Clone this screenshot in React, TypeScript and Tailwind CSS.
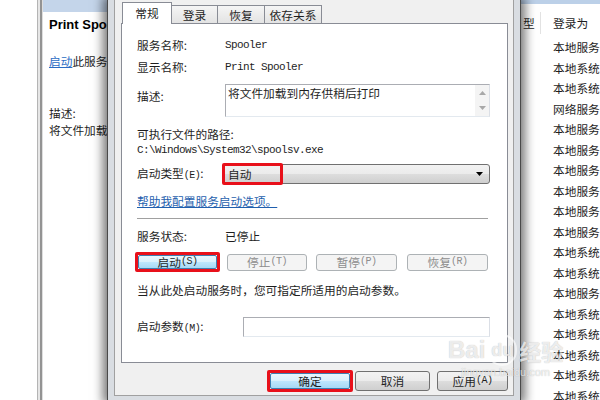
import React from "react";

const normalBtn =
  "flex items-center justify-center rounded-[3px] border border-[#707070] bg-[linear-gradient(#f2f2f2_0%,#ebebeb_50%,#dddddd_51%,#cfcfcf_100%)] text-[#1e1e1e]";
const disabledBtn =
  "flex items-center justify-center rounded-[3px] border border-[#adb2b5] bg-[#f4f4f4] text-[#8d8d8d]";
const blueBtn =
  "flex h-full w-full items-center justify-center rounded-[2px] border border-[#3c7fb1] bg-[linear-gradient(#eaf6fd_0%,#d9f0fc_50%,#bee6fd_51%,#a7d9f5_100%)] text-[#1e1e1e]";

function Key({ k }: { k: string }) {
  return <span className="font-['Liberation_Mono',monospace] text-[10px] tracking-[-0.5px]">({k})</span>;
}

const rows = [
  "本地服务",
  "本地系统",
  "本地系统",
  "网络服务",
  "本地服务",
  "本地服务",
  "本地服务",
  "本地服务",
  "本地服务",
  "本地服务",
  "本地系统",
  "本地系统",
  "本地服务",
  "本地系统",
  "本地系统",
  "本地系统",
  "本地系统",
  "本地系统",
];

export default function App() {
  return (
    <div className="relative flex h-[400px] w-[600px] overflow-hidden bg-white font-['Noto_Sans_CJK_SC',sans-serif] text-[11.7px] leading-[16px] text-[#1e1e1e]">
      {/* white margin */}
      <div className="w-[37px] shrink-0 bg-white" />
      {/* window edge lines */}
      <div className="flex w-[6px] shrink-0">
        <div className="w-px bg-[#b4b4b4]" />
        <div className="w-[2px] bg-[#e6e6e6]" />
        <div className="w-[2px] bg-[#939393]" />
        <div className="w-px bg-[#dedede]" />
      </div>
      {/* left extended panel */}
      <div className="flex w-[64px] shrink-0 flex-col overflow-hidden whitespace-nowrap bg-white">
        <div className="h-[12px] shrink-0 bg-[#c4d5ea]" />
        <div className="mt-[4px] flex h-[18px] items-center pl-[6px] font-['Liberation_Sans',sans-serif] text-[13px] font-bold text-black">
          Print Spooler
        </div>
        <div className="mt-[18px] flex h-[18px] items-center pl-[6px]">
          <span className="text-[#2b6cc4] underline">启动</span>此服务
        </div>
        <div className="mt-[34px] flex h-[17px] items-center pl-[6px]">描述:</div>
        <div className="flex h-[18px] items-center pl-[6px]">将文件加载到内存供稍后打印</div>
      </div>

      {/* dialog */}
      <div className="relative z-10 flex w-[414px] shrink-0 flex-col border-x border-[#4a4a4a] bg-[#d9dde2] px-[6px] pb-[4px] shadow-[0_0_10px_4px_rgba(0,0,0,0.55)]">
        <div className="flex h-[396px] flex-col border-x border-b border-[#a0a0a0] bg-[#f0f0f0] pl-[6px] pr-[5px] pb-[3px]">
          {/* tabs */}
          <div className="mt-[2px] flex h-[21px] items-end pl-[1px]">
            <div className="relative z-10 -mb-px flex h-[22px] w-[50px] items-center justify-center border-x border-t border-[#898c95] bg-white pb-[2px]">
              常规
            </div>
            <div className="flex h-[18px] w-[46px] items-center justify-center border-r border-t border-[#898c95] bg-[linear-gradient(#f5f5f5,#e3e3e3)]">
              登录
            </div>
            <div className="flex h-[18px] w-[47px] items-center justify-center border-r border-t border-[#898c95] bg-[linear-gradient(#f5f5f5,#e3e3e3)]">
              恢复
            </div>
            <div className="flex h-[18px] w-[57px] items-center justify-center border-r border-t border-[#898c95] bg-[linear-gradient(#f5f5f5,#e3e3e3)]">
              依存关系
            </div>
          </div>

          {/* tab panel */}
          <div className="flex h-[340px] flex-col border border-[#898c95] bg-white pl-[15px] pr-[16px]">
            <div className="mt-[12px] flex h-[18px] items-center">
              <span className="w-[88px]">服务名称:</span>
              <span className="font-['Liberation_Mono',monospace] text-[11px] tracking-[-0.6px]">Spooler</span>
            </div>
            <div className="mt-[4px] flex h-[18px] items-center">
              <span className="w-[88px]">显示名称:</span>
              <span className="font-['Liberation_Mono',monospace] text-[11px] tracking-[-0.6px]">Print Spooler</span>
            </div>
            <div className="mt-[8px] flex h-[33px] items-start">
              <span className="w-[88px] pt-[4px]">描述:</span>
              <div className="flex h-[33px] w-[265px] border border-[#abadb3] border-b-[#e3e9ef] border-r-[#dbdfe6] bg-white">
                <div className="flex-1 pl-[2px] pt-[1px] leading-[14px]">将文件加载到内存供稍后打印</div>
                <div className="flex w-[14px] flex-col items-center justify-between bg-[#f4f4f4] py-[6px]">
                  <svg width="7" height="4" viewBox="0 0 7 4">
                    <path d="M0 4L3.5 0L7 4z" fill="#a8a8a8" />
                  </svg>
                  <svg width="7" height="4" viewBox="0 0 7 4">
                    <path d="M0 0L3.5 4L7 0z" fill="#a8a8a8" />
                  </svg>
                </div>
              </div>
            </div>
            <div className="mt-[8px] flex h-[18px] items-center">可执行文件的路径:</div>
            <div className="flex h-[14px] items-center font-['Liberation_Mono',monospace] text-[11px] leading-[13px] tracking-[-0.6px]">
              {"C:\\Windows\\System32\\spoolsv.exe"}
            </div>
            <div className="mt-[7px] flex h-[20px] items-center">
              <span className="w-[85px]">
                启动类型<Key k="E" />:
              </span>
              <div className="relative flex h-[20px] w-[268px] items-center rounded-[3px] border border-[#707070] bg-[linear-gradient(#f2f2f2_0%,#ebebeb_50%,#dddddd_51%,#cfcfcf_100%)] pl-[5px]">
                <span>自动</span>
                <svg className="absolute right-[6px] top-[7px]" width="7" height="4" viewBox="0 0 7 4">
                  <path d="M0 0h7L3.5 4z" fill="#000" />
                </svg>
                <div className="absolute -left-px -top-[2px] h-[22px] w-[61px] rounded-[2px] border-[3px] border-[#e8101a]" />
              </div>
            </div>
            <div className="mt-[8px] flex h-[18px] items-center">
              <span className="text-[#1f5fae] underline">帮助我配置服务启动选项。</span>
            </div>
            <div className="mr-[3px] mt-[8px] h-[2px] border-b border-t border-b-white border-t-[#a0a0a0]" />
            <div className="mt-[7px] flex h-[18px] items-center">
              <span className="w-[88px]">服务状态:</span>
              <span>已停止</span>
            </div>
            <div className="mt-[7px] flex h-[20px] items-center">
              <div className="-ml-[2px] h-[20px] w-[85px] rounded-[2px] border-[3px] border-[#e8101a]">
                <div className={blueBtn}>
                  启动<Key k="S" />
                </div>
              </div>
              <div className={`${disabledBtn} ml-[7px] h-[17px] w-[80px]`}>
                停止<Key k="T" />
              </div>
              <div className={`${disabledBtn} ml-[9px] h-[17px] w-[81px]`}>
                暂停<Key k="P" />
              </div>
              <div className={`${disabledBtn} ml-[10px] h-[17px] w-[81px]`}>
                恢复<Key k="R" />
              </div>
            </div>
            <div className="mt-[9px] flex h-[18px] items-center whitespace-nowrap">
              当从此处启动服务时，您可指定所适用的启动参数。
            </div>
            <div className="mt-[18px] flex h-[20px] items-center">
              <span className="w-[106px]">
                启动参数<Key k="M" />:
              </span>
              <div className="h-[20px] w-[247px] border border-[#abadb3] border-b-[#e3e9ef] border-r-[#dbdfe6] bg-white" />
            </div>
          </div>

          {/* dialog buttons */}
          <div className="mt-[7px] flex h-[22px] items-center justify-end">
            <div className="h-[22px] w-[86px] rounded-[2px] border-[3px] border-[#e8101a]">
              <div className={blueBtn}>确定</div>
            </div>
            <div className={`${normalBtn} ml-[2px] h-[20px] w-[75px]`}>取消</div>
            <div className={`${normalBtn} ml-[7px] h-[20px] w-[71px]`}>
              应用<Key k="A" />
            </div>
          </div>
        </div>
      </div>

      {/* right services list */}
      <div className="flex w-[79px] shrink-0 flex-col overflow-hidden whitespace-nowrap bg-white">
        <div className="h-[4px] shrink-0 bg-[#bcd0e8]" />
        <div className="flex h-[33px] shrink-0 items-center pt-[5px]">
          <span className="w-[19px] pl-[2px]">型</span>
          <div className="h-[22px] w-px bg-[#e2e2e2]" />
          <span className="pl-[12px]">登录为</span>
        </div>
        {rows.map((r, i) => (
          <div key={i} className="flex h-[20.5px] shrink-0 items-center pl-[32px]">
            {r}
          </div>
        ))}
      </div>

      {/* watermark */}
      <div className="pointer-events-none absolute left-[448px] top-[334px] z-20 flex flex-col items-center text-white/75 [text-shadow:0_0_1px_rgba(0,0,0,0.3)]">
        <div className="flex items-center font-['Liberation_Sans',sans-serif] text-[24px] font-bold leading-[28px]">
          Bai
          <span className="mx-[2px] rounded-full border-2 border-white/60 px-[2px] text-[18px]">du</span>
          <span className="font-['Noto_Sans_CJK_SC',sans-serif] text-[22px]">经验</span>
        </div>
        <div className="font-['Liberation_Sans',sans-serif] text-[11px] leading-[12px]">jingyan.baidu.com</div>
      </div>
    </div>
  );
}
